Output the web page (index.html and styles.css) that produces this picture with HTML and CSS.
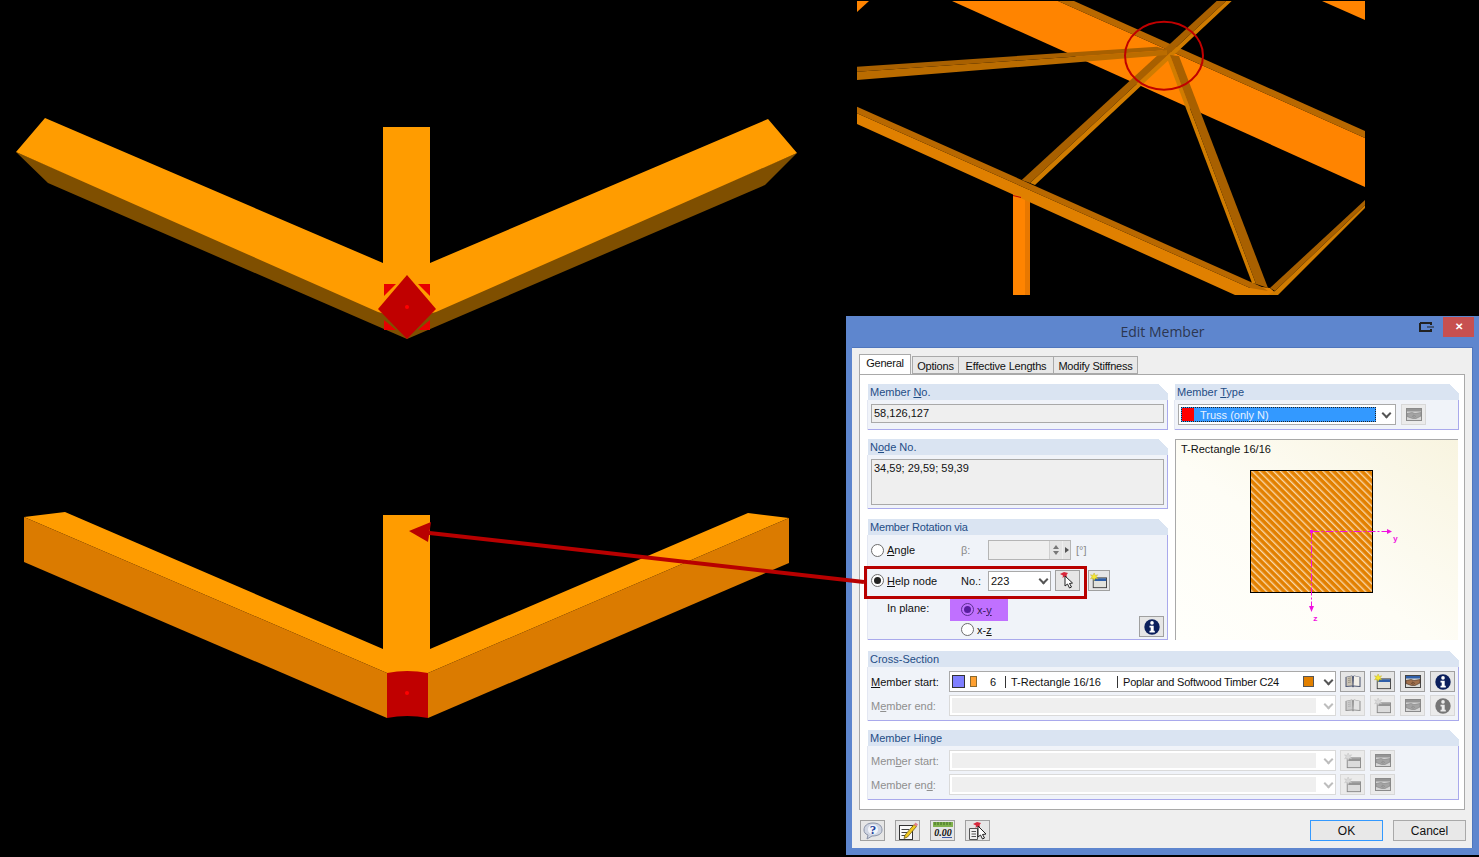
FILE: index.html
```html
<!DOCTYPE html>
<html>
<head>
  <meta charset="UTF-8">
  <title>Edit Member</title>
  <link rel="stylesheet" href="styles.css">
</head>
<body>
  <svg width="0" height="0" class="defs">
    <symbol id="i-book" viewBox="0 0 16 13">
      <path d="M0.500 2 L7 0.500 L8 1.500 L9 0.500 L15.500 2 L15.500 12 L9 11.500 L8 12.500 L7 11.500 L0.500 12 Z" fill="#46506e"/>
      <path d="M1.500 2 L7 1 L7.500 10.500 L1.500 11 Z" fill="#c9c2b4"/>
      <path d="M14.500 2 L9 1 L8.500 10.500 L14.500 11 Z" fill="#f2efe8"/>
      <path d="M3 3.500 L6 3 M3 5.500 L6 5 M3 7.500 L6 7" stroke="#8b8577" stroke-width=".7"/>
    </symbol>
    <symbol id="i-new" viewBox="0 0 20 18">
      <rect x="3.500" y="5.500" width="15" height="11" fill="#e2e2dc" stroke="#3a3a3a"/>
      <rect x="4" y="6" width="14" height="3" fill="#2f5fa8"/>
      <path d="M4.500 0 L5.700 2.700 L8.500 2 L6.800 4.300 L8.500 6.600 L5.700 5.900 L4.500 8.600 L3.300 5.900 L.500 6.600 L2.200 4.300 L.500 2 L3.300 2.700 Z" fill="#f6e832" stroke="#c0aa20" stroke-width=".5"/>
    </symbol>
    <symbol id="i-hands" viewBox="0 0 16 13">
      <rect x=".500" y=".500" width="15" height="12" fill="#d8d8d4" stroke="#444"/>
      <rect x="1" y="1" width="14" height="2.500" fill="#2f5fa8"/>
      <path d="M1 5.500 L6 4.500 L9 5.500 L15 4.500 L15 8 L10 10.500 L6.500 10.500 L1 8.500 Z" fill="#a0704c" stroke="#4a3020" stroke-width=".6"/>
      <path d="M7 7 L10 8.500 M6 8 L8.500 9.500" stroke="#4a3020" stroke-width=".6"/>
    </symbol>
    <symbol id="i-info" viewBox="0 0 16 16">
      <circle cx="8" cy="8" r="7.700" fill="#0b1f5c"/>
      <circle cx="8" cy="3.900" r="1.800" fill="#fff"/>
      <path d="M5.500 6.800 H9.700 V11.800 H10.800 V13.500 H5.500 V11.800 H6.700 V8.400 H5.500 Z" fill="#fff"/>
    </symbol>
    <symbol id="i-pick" viewBox="0 0 16 17">
      <path d="M0 2 L4 0 L8 1 L6.500 3 L7 5 L4.500 4.500 L2.500 6 L3 3.500 Z" fill="#d8283c"/>
      <path d="M5 4 L5 14 L7.500 12 L9.500 16 L11.500 15 L9.500 11.500 L12.500 11 Z" fill="#fff" stroke="#222" stroke-width="1"/>
    </symbol>
    <symbol id="i-edit" viewBox="0 0 20 18">
      <rect x="1.500" y="3.500" width="13" height="14" fill="#fafafa" stroke="#333"/>
      <path d="M3.500 7.500 H11 M3.500 10.500 H9 M3.500 13.500 H8" stroke="#444" stroke-width="1"/>
      <path d="M7 13 L16 2.500 L18.500 4.500 L9.500 15 L6 16.500 Z" fill="#f0c820" stroke="#5a4a10" stroke-width=".7"/>
      <path d="M16 2.500 L17.500 .500 L20 2.500 L18.500 4.500 Z" fill="#e2808c"/>
    </symbol>
    <symbol id="i-pickdoc" viewBox="0 0 20 18">
      <path d="M1.500 6.500 H9.500 V17.500 H1.500 Z" fill="#f1f1f1" stroke="#555"/>
      <path d="M3.500 9.500 H8 M3.500 12 H8 M3.500 14.500 H8" stroke="#555"/>
      <path d="M5 2 L9 0 L13 1 L11.500 3 L12 5 L9.500 4.500 L7.500 6 L8 3.500 Z" fill="#d8283c"/>
      <path d="M10 4 L10 15 L12.500 13 L14.500 17 L16.500 16 L14.500 12.500 L18 12 Z" fill="#fff" stroke="#222"/>
    </symbol>
  </svg>

  <div class="stage">
    <svg class="scene" width="1479" height="857" viewBox="0 0 1479 857">
      <!-- top left: member seen from above -->
      <polygon points="16,152 48,183 407,339 765,185 797,153 407,320" fill="#7f4f00"/>
      <polygon points="45,118 383,263 383,127 430,127 430,263 768,119 797,153 436,312 407,320 378,312 16,152" fill="#ff9c00"/>
      <polygon points="384,284 396,284 384,296" fill="#e80000"/>
      <polygon points="430,284 418,284 430,296" fill="#e80000"/>
      <polygon points="384,320 396,330 384,330" fill="#e80000"/>
      <polygon points="430,320 418,330 430,330" fill="#e80000"/>
      <polygon points="407,275 436,309 407,339 378,309" fill="#c00000"/>
      <circle cx="407" cy="307" r="2" fill="#ff0000"/>

      <!-- bottom left: member after rotation -->
      <polygon points="24,517 65,512 383,649 383,515 430,515 430,649 748,513 789,518 428,673 387,673" fill="#ff9c00"/>
      <polygon points="24,517 24,562 387,718 387,673" fill="#db7b00"/>
      <polygon points="789,518 789,563 428,718 428,673" fill="#db7b00"/>
      <path d="M387 673 Q407 669 428 673 V718 Q407 714 387 718 Z" fill="#c00000"/>
      <circle cx="407" cy="693" r="2" fill="#ff0000"/>

      <!-- top right: view of the structure -->
      <svg x="857" y="1" width="508" height="294" viewBox="857 1 508 294">
        <polygon points="857,12 869,1 857,1" fill="#ff8400"/>
        <polygon points="1322,1 1365,1 1365,20" fill="#ff8400"/>
        <polygon points="952,1 1058,1 1365,138 1365,187" fill="#ff8400"/>
        <polygon points="1058,1 1074,1 1365,131 1365,138" fill="#b86800"/>
        <rect x="1013" y="190" width="12" height="105" fill="#ff8400"/>
        <rect x="1025" y="190" width="5" height="105" fill="#e87800"/>
        <polygon points="857,113.200 1250,288 1262,287 1270,288 1278,295 1235,295 857,124" fill="#e08000"/>
        <polygon points="857,106.700 1262,287 1268,291 1250,288 857,113.200" fill="#b86800"/>
        <polygon points="1030,183 1226,1 1231.700,1 1035,185" fill="#d07c00"/>
        <polygon points="1021.700,180 1216.700,1 1226,1 1030,183" fill="#a86000"/>
        <polygon points="857,71.700 1155,51 1167,50 1167,55 857,80" fill="#ba6c00"/>
        <polygon points="857,66.700 1157,46.700 1167,50 1155,51 857,71.700" fill="#a86000"/>
        <polygon points="1167,58 1170,55 1256,284 1252,283" fill="#d07c00"/>
        <polygon points="1170,55 1179,56 1268,288 1256,284" fill="#a86000"/>
        <polygon points="1275,291 1365,205 1365,208 1278,295 1268,295" fill="#d07c00"/>
        <polygon points="1270,288 1365,200 1365,205 1275,291" fill="#a86000"/>
        <polygon points="1013,195 1021,197 1021,198 1013,196" fill="#c00000"/>
        <ellipse cx="1164" cy="55.700" rx="39" ry="34" fill="none" stroke="#c00000" stroke-width="2"/>
      </svg>
    </svg>

    <div class="dialog">
      <div class="titlebar">
        <span class="title">Edit Member</span>
        <svg class="shrink" width="15" height="10" viewBox="0 0 15 10">
          <path d="M1 1 H12 V3 M1 1 V9 H12 V7" fill="none" stroke="#222" stroke-width="2"/>
          <path d="M8 5 H15" stroke="#222" stroke-width="1"/>
        </svg>
        <span class="close">&#10005;</span>
      </div>

      <div class="client">
        <div class="tabs">
          <span class="tab active">General</span>
          <span class="tab t-options">Options</span>
          <span class="tab t-lengths">Effective Lengths</span>
          <span class="tab t-stiff">Modify Stiffness</span>
        </div>

        <div class="panel">
          <div class="top-cols">
            <div class="left-col">
              <section class="group">
                <h3>Member <u>N</u>o.</h3>
                <div class="group-body body-no">
                  <div class="field field-no">58,126,127</div>
                </div>
              </section>

              <section class="group">
                <h3>N<u>o</u>de No.</h3>
                <div class="group-body body-node">
                  <div class="field field-node">34,59; 29,59; 59,39</div>
                </div>
              </section>

              <section class="group group-rot">
                <h3 class="tight">Member Rotation via</h3>
                <div class="group-body body-rot">
                  <div class="rot-row row-angle">
                    <span class="radio"></span>
                    <span class="rot-label"><u>A</u>ngle</span>
                    <span class="rot-key">β:</span>
                    <span class="spin">
                      <span class="spin-val"></span>
                      <span class="spin-arrows"><i class="up"></i><i class="down"></i></span>
                      <span class="spin-next"><i></i></span>
                    </span>
                    <span class="unit">[°]</span>
                  </div>
                  <div class="rot-row row-help">
                    <span class="radio on"></span>
                    <span class="rot-label"><u>H</u>elp node</span>
                    <span class="rot-key dark">No.:</span>
                    <span class="combo combo-no"><span class="combo-text">223</span><span class="chev"></span></span>
                    <button class="btn btn-pick"><svg width="16" height="17"><use href="#i-pick"/></svg></button>
                    <button class="btn btn-newnode"><svg width="18" height="16"><use href="#i-new"/></svg></button>
                  </div>
                  <div class="plane-row">
                    <span class="plane-label">In plane:</span>
                    <div class="plane-opts">
                      <div class="plane-opt picked"><span class="radio on"></span><span>x-<u>y</u></span></div>
                      <div class="plane-opt"><span class="radio"></span><span>x-<u>z</u></span></div>
                    </div>
                    <button class="btn btn-info"><svg width="16" height="16"><use href="#i-info"/></svg></button>
                  </div>
                </div>
              </section>
            </div>

            <div class="right-col">
              <section class="group">
                <h3>Member <u>T</u>ype</h3>
                <div class="group-body body-type">
                  <span class="combo combo-type">
                    <span class="type-sel"><i class="swatch-red"></i><span>Truss (only N)</span></span>
                    <span class="chev"></span>
                  </span>
                  <button class="btn off"><svg width="16" height="13"><use href="#i-hands"/></svg></button>
                </div>
              </section>

              <div class="preview">
                <div class="preview-name">T-Rectangle 16/16</div>
                <svg class="section" width="200" height="165" viewBox="0 0 200 165">
                  <defs>
                    <pattern id="hatch" width="5" height="5" patternUnits="userSpaceOnUse" patternTransform="rotate(-45)">
                      <rect width="5" height="5" fill="#e28000"/>
                      <rect x="0" width="1" height="5" fill="#f8d8a8"/>
                      <rect x="1" width="1" height="5" fill="#eda040"/>
                    </pattern>
                  </defs>
                  <rect x=".500" y=".500" width="122" height="122" fill="url(#hatch)" stroke="#000" stroke-width="1"/>
                  <path d="M61.500 61.500 H137 M61.500 61.500 V136" stroke="#f010e0" stroke-width="1" stroke-dasharray="8 2 2 2" fill="none"/>
                  <rect x="60" y="60" width="3" height="3" fill="#f010e0"/>
                  <polygon points="137,59 142,61.500 137,64" fill="#f010e0"/>
                  <polygon points="59,136 64,136 61.500,142" fill="#f010e0"/>
                  <text x="143" y="71" class="axis">y</text>
                  <text x="63" y="151" class="axis">z</text>
                </svg>
              </div>
            </div>
          </div>

          <section class="group wide">
            <h3>Cross-Section</h3>
            <div class="group-body body-cs">
              <div class="cs-row">
                <span class="cs-label"><u>M</u>ember start:</span>
                <span class="combo combo-cs">
                  <i class="swatch-blue"></i><i class="swatch-orange"></i>
                  <span class="cs-no">6</span>
                  <span class="cs-name">T-Rectangle 16/16</span>
                  <span class="cs-mat">Poplar and Softwood Timber C24</span>
                  <i class="swatch-mat"></i>
                  <span class="chev"></span>
                </span>
                <div class="cs-btns">
                  <button class="btn"><svg width="16" height="13"><use href="#i-book"/></svg></button>
                  <button class="btn"><svg width="18" height="16"><use href="#i-new"/></svg></button>
                  <button class="btn"><svg width="16" height="13"><use href="#i-hands"/></svg></button>
                  <button class="btn"><svg width="16" height="16"><use href="#i-info"/></svg></button>
                </div>
              </div>
              <div class="cs-row">
                <span class="cs-label grey">M<u>e</u>mber end:</span>
                <span class="combo combo-cs off"><span class="combo-fill"></span><span class="chev"></span></span>
                <div class="cs-btns">
                  <button class="btn off"><svg width="16" height="13"><use href="#i-book"/></svg></button>
                  <button class="btn off"><svg width="18" height="16"><use href="#i-new"/></svg></button>
                  <button class="btn off"><svg width="16" height="13"><use href="#i-hands"/></svg></button>
                  <button class="btn off"><svg width="16" height="16"><use href="#i-info"/></svg></button>
                </div>
              </div>
            </div>
          </section>

          <section class="group wide">
            <h3>Member Hinge</h3>
            <div class="group-body body-cs">
              <div class="cs-row">
                <span class="cs-label grey">Mem<u>b</u>er start:</span>
                <span class="combo combo-cs off"><span class="combo-fill"></span><span class="chev"></span></span>
                <div class="cs-btns">
                  <button class="btn off"><svg width="18" height="16"><use href="#i-new"/></svg></button>
                  <button class="btn off"><svg width="16" height="13"><use href="#i-hands"/></svg></button>
                </div>
              </div>
              <div class="cs-row">
                <span class="cs-label grey">Member en<u>d</u>:</span>
                <span class="combo combo-cs off"><span class="combo-fill"></span><span class="chev"></span></span>
                <div class="cs-btns">
                  <button class="btn off"><svg width="18" height="16"><use href="#i-new"/></svg></button>
                  <button class="btn off"><svg width="16" height="13"><use href="#i-hands"/></svg></button>
                </div>
              </div>
            </div>
          </section>
        </div>

        <div class="footer">
          <div class="foot-icons">
            <button class="btn">
              <svg width="20" height="18" viewBox="0 0 20 18">
                <path d="M10 1 C16 1 19 4 19 8 C19 12 15 14 9 14 L4 17 L5 13 C2 12 1 10 1 8 C1 4 4 1 10 1 Z" fill="#cfd5e2" stroke="#8a93a8"/>
                <circle cx="10" cy="7.500" r="5" fill="#f2f4fa"/>
                <text x="10" y="12" class="icon-q">?</text>
              </svg>
            </button>
            <button class="btn"><svg width="20" height="18"><use href="#i-edit"/></svg></button>
            <button class="btn">
              <svg width="22" height="18" viewBox="0 0 22 18">
                <rect x="1" y="0" width="20" height="5" fill="#7fb04c"/>
                <path d="M3 0 V3 M6 0 V3 M9 0 V3 M12 0 V3 M15 0 V3 M18 0 V3" stroke="#3f6a22" stroke-width="1"/>
                <text x="11" y="14" class="icon-num">0.00</text>
                <path d="M10 15.500 H20" stroke="#3a5aa8" stroke-width="1"/>
              </svg>
            </button>
            <button class="btn"><svg width="20" height="18"><use href="#i-pickdoc"/></svg></button>
          </div>
          <div class="foot-actions">
            <button class="action default">OK</button>
            <button class="action">Cancel</button>
          </div>
        </div>
      </div>
    </div>

    <!-- callout drawn over the dialog -->
    <div class="callout"></div>
    <svg class="arrow" width="1479" height="857" viewBox="0 0 1479 857">
      <line x1="864" y1="582" x2="425" y2="532.500" stroke="#b80000" stroke-width="4"/>
      <polygon points="409,531 431,522 428,542" fill="#b80000"/>
    </svg>
  </div>
</body>
</html>
```

FILE: styles.css
```css
* {
  box-sizing: border-box;
}

html, body {
  margin: 0;
  background-color: #000;
}

.defs {
  position: absolute;
}

.stage {
  position: relative;
  width: 1479px;
  height: 857px;
  overflow: hidden;
  font-family: "Liberation Sans", Arial, sans-serif;
  font-size: 11px;
  color: #111;
}

.scene, .arrow {
  position: absolute;
  left: 0;
  top: 0;
}

.arrow {
  pointer-events: none;
}

/* Dialog window */
.dialog {
  position: absolute;
  left: 846px;
  top: 316px;
  width: 633px;
  height: 539px;
  background-color: #5e86ce;
  padding: 0 6px 7px 6px;
  display: flex;
  flex-direction: column;
}

.titlebar {
  height: 31px;
  position: relative;
  flex-shrink: 0;
}

.title {
  position: absolute;
  left: 0;
  right: 0;
  top: 6px;
  text-align: center;
  font-family: "Open Sans", sans-serif;
  font-size: 14px;
  color: #2c3650;
}

.shrink {
  position: absolute;
  left: 567px;
  top: 6px;
}

.close {
  position: absolute;
  left: 591px;
  top: 1px;
  width: 31px;
  height: 20px;
  line-height: 20px;
  background-color: #c75050;
  color: #fff;
  text-align: center;
  font-size: 10px;
  font-weight: bold;
}

.client {
  flex: 1;
  background-color: #efefef;
  padding: 6px 9px 0 7px;
  border: 1px solid #4f76bd;
  border-width: 1px 1px 0 0;
  display: flex;
  flex-direction: column;
}

/* Tabs */
.tabs {
  display: flex;
  align-items: flex-end;
  height: 20px;
  flex-shrink: 0;
  letter-spacing: -.2px;
}

.tab {
  height: 18px;
  line-height: 18px;
  text-align: center;
  background-color: #e8e8e8;
  border: 1px solid #a9a9a9;
  border-left-width: 0;
}

.tab.active {
  height: 20px;
  line-height: 16px;
  width: 52px;
  background-color: #fff;
  border-left-width: 1px;
  border-bottom: 0;
  margin-right: 1px;
}

.t-options {
  width: 47px;
  border-left-width: 1px;
}

.t-lengths {
  width: 95px;
}

.t-stiff {
  width: 84px;
}

/* White tab panel */
.panel {
  width: 606px;
  height: 436px;
  background-color: #fff;
  border: 1px solid #a9a9a9;
  padding: 9px 5px 0 8px;
  flex-shrink: 0;
}

.top-cols {
  display: flex;
  gap: 7px;
}

.left-col {
  width: 300px;
  display: flex;
  flex-direction: column;
  gap: 9px;
}

.right-col {
  width: 284px;
  display: flex;
  flex-direction: column;
  gap: 9px;
}

/* Group box with chamfered header */
.group h3 {
  margin: 0;
  height: 16px;
  line-height: 16px;
  padding-left: 2px;
  font-size: 11px;
  font-weight: normal;
  color: #1f4d86;
  background: linear-gradient(225deg, transparent 7px, #dae4f2 7px);
}

.group h3.tight {
  letter-spacing: -.2px;
}

.group-body {
  background-color: #f0f3f9;
  border-right: 1px solid #a9a9ec;
  border-bottom: 1px solid #a9a9ec;
  box-shadow: -1px 0 0 #e3e7f2;
}

.group.wide {
  width: 591px;
  margin-top: 9px;
}

.top-cols + .group.wide {
  margin-top: 11px;
}

.group-rot {
  margin-top: 1px;
}

.body-no {
  height: 30px;
  padding: 4px 3px;
}

.body-node {
  height: 54px;
  padding: 4px 3px;
}

.body-type {
  height: 30px;
  padding: 4px 3px;
  display: flex;
  gap: 5px;
}

.body-rot {
  height: 105px;
  padding-top: 5px;
}

.field {
  background-color: #efefef;
  border: 1px solid #a9a9a9;
  padding: 1px 2px;
}

.field-no {
  height: 19px;
  line-height: 15px;
}

.field-node {
  height: 46px;
  line-height: 15px;
}

/* Member rotation rows */
.rot-row {
  display: flex;
  align-items: center;
}

.row-angle {
  height: 20px;
  padding-left: 3px;
}

.row-help {
  height: 21px;
  margin-top: 10px;
  padding-left: 3px;
}

.radio {
  width: 13px;
  height: 13px;
  border: 1px solid #6c6c6c;
  border-radius: 50%;
  background-color: #fff;
  flex-shrink: 0;
  display: flex;
  align-items: center;
  justify-content: center;
}

.radio.on::after {
  content: "";
  width: 7px;
  height: 7px;
  border-radius: 50%;
  background-color: #222;
}

.rot-label {
  width: 77px;
  padding-left: 3px;
}

.rot-key {
  width: 27px;
  color: #8a8a8a;
}

.rot-key.dark {
  color: #111;
}

.spin {
  width: 83px;
  height: 20px;
  display: flex;
  border: 1px solid #b5b5b5;
  background-color: #efefef;
}

.spin-val {
  flex: 1;
}

.spin-arrows {
  width: 13px;
  display: flex;
  flex-direction: column;
  align-items: center;
  justify-content: center;
  gap: 2px;
  background-color: #e4e4e4;
  border-left: 1px solid #cfcfcf;
}

.spin-arrows i {
  width: 0;
  height: 0;
  border-left: 3px solid transparent;
  border-right: 3px solid transparent;
}

.spin-arrows .up {
  border-bottom: 4px solid #777;
}

.spin-arrows .down {
  border-top: 4px solid #777;
}

.spin-next {
  width: 7px;
  margin-left: 1px;
  display: flex;
  align-items: center;
  justify-content: center;
  background-color: #e4e4e4;
}

.spin-next i {
  width: 0;
  height: 0;
  border-top: 3px solid transparent;
  border-bottom: 3px solid transparent;
  border-left: 4px solid #555;
}

.unit {
  margin-left: 5px;
  color: #8a8a8a;
}

.plane-row {
  display: flex;
  height: 41px;
  margin-top: 7px;
  padding-left: 19px;
}

.plane-label {
  width: 63px;
  padding-top: 4px;
}

.plane-opts {
  width: 58px;
  display: flex;
  flex-direction: column;
}

.plane-opt {
  height: 23px;
  padding-left: 11px;
  display: flex;
  align-items: center;
  gap: 3px;
  margin-bottom: -3px;
}

.plane-opt.picked {
  background-color: #c070ff;
  color: #3a1a60;
}

.plane-opt.picked .radio {
  background-color: #c070ff;
  border-color: #5a2f90;
}

.plane-opt.picked .radio.on::after {
  background-color: #5a1ea0;
}

.btn-info {
  margin-left: auto;
  margin-right: 3px;
  margin-top: 18px;
}

/* Combos */
.combo {
  display: flex;
  align-items: center;
  height: 21px;
  background-color: #fff;
  border: 1px solid #a9a9a9;
}

.combo-no {
  width: 63px;
  height: 20px;
  padding-left: 2px;
  margin-right: 4px;
}

.combo-text {
  flex: 1;
}

.chev {
  width: 13px;
  height: 13px;
  flex-shrink: 0;
  margin: 0 1px 0 auto;
  position: relative;
}

.chev::before {
  content: "";
  position: absolute;
  left: 4px;
  top: 2px;
  width: 5px;
  height: 5px;
  border-right: 2px solid #555;
  border-bottom: 2px solid #555;
  transform: rotate(45deg);
}

.combo.off .chev::before {
  border-color: #bdbdbd;
}

.combo-type {
  width: 218px;
  padding: 2px;
}

.type-sel {
  width: 195px;
  height: 15px;
  background-color: #3399ff;
  color: #e8f2ff;
  display: flex;
  align-items: center;
  outline: 1px dotted #222;
  outline-offset: -1px;
  gap: 6px;
  padding-left: 1px;
}

.swatch-red {
  width: 12px;
  height: 13px;
  background-color: #f00;
}

/* Buttons */
.btn {
  width: 25px;
  height: 21px;
  padding: 0;
  background-color: #e6e6e6;
  border: 1px solid #a0a0a0;
  display: flex;
  align-items: center;
  justify-content: center;
  flex-shrink: 0;
}

.btn svg {
  display: block;
}

.btn.off {
  border-color: #d8d8d8;
  background-color: #ebebeb;
}

.btn.off svg {
  filter: grayscale(1) contrast(.6) brightness(1.15);
  opacity: .75;
}

.btn-newnode {
  width: 22px;
  margin-left: 8px;
}

/* Preview */
.preview {
  width: 283px;
  height: 201px;
  border-left: 1px solid #a9a9a9;
  border-top: 1px solid #a9a9a9;
  background: linear-gradient(215deg, #f8f4e0 0, #fefdf6 55%, #fffffb 100%);
  position: relative;
}

.preview-name {
  padding: 3px 0 0 5px;
}

.section {
  position: absolute;
  left: 74px;
  top: 30px;
}

.axis {
  font-family: "Liberation Mono", monospace;
  font-size: 8px;
  font-weight: bold;
  fill: #f010e0;
}

/* Cross-section and hinge rows */
.body-cs {
  padding: 4px 3px 4px 3px;
}

.cs-row {
  display: flex;
  align-items: center;
  height: 21px;
  margin-bottom: 3px;
}

.cs-row:last-child {
  margin-bottom: 0;
}

.cs-label {
  width: 78px;
}

.cs-label.grey {
  color: #8f8f8f;
}

.combo-cs {
  width: 387px;
  padding-left: 2px;
}

.combo-cs.off {
  border-color: #dadada;
}

.combo-fill {
  width: 364px;
  height: 15px;
  background-color: #efefef;
}

.swatch-blue {
  width: 13px;
  height: 13px;
  background-color: #8080ff;
  border: 1px solid #333;
}

.swatch-orange {
  width: 7px;
  height: 11px;
  margin-left: 5px;
  background-color: #ffa030;
  border: 1px solid #8a6a30;
}

.cs-no {
  width: 28px;
  text-align: right;
  padding-right: 9px;
}

.cs-name {
  width: 112px;
  padding-left: 5px;
  border-left: 1px solid #333;
}

.cs-mat {
  width: 186px;
  padding-left: 5px;
  border-left: 1px solid #333;
  letter-spacing: -.2px;
}

.swatch-mat {
  width: 11px;
  height: 11px;
  background-color: #e28000;
  border: 1px solid #555;
}

.cs-btns {
  display: flex;
  gap: 5px;
  margin-left: 4px;
}

/* Footer */
.footer {
  display: flex;
  justify-content: space-between;
  padding: 10px 0 0 1px;
}

.foot-icons {
  display: flex;
  gap: 10px;
}

.foot-actions {
  display: flex;
  gap: 10px;
  margin-right: -3px;
}

.action {
  width: 73px;
  height: 21px;
  padding: 0;
  font-family: "Liberation Sans", Arial, sans-serif;
  font-size: 12px;
  color: #111;
  background-color: #e8e8e8;
  border: 1px solid #a9a9a9;
}

.action.default {
  border-color: #3399ff;
}

.icon-q {
  font-family: "Liberation Serif", serif;
  font-size: 13px;
  font-weight: bold;
  text-anchor: middle;
  fill: #21409a;
}

.icon-num {
  font-family: "Liberation Serif", serif;
  font-size: 10px;
  font-style: italic;
  font-weight: bold;
  text-anchor: middle;
  fill: #111;
}

/* Red box round the help node row */
.callout {
  position: absolute;
  left: 864px;
  top: 566px;
  width: 223px;
  height: 33px;
  border: 3.500px solid #b80000;
}
```
